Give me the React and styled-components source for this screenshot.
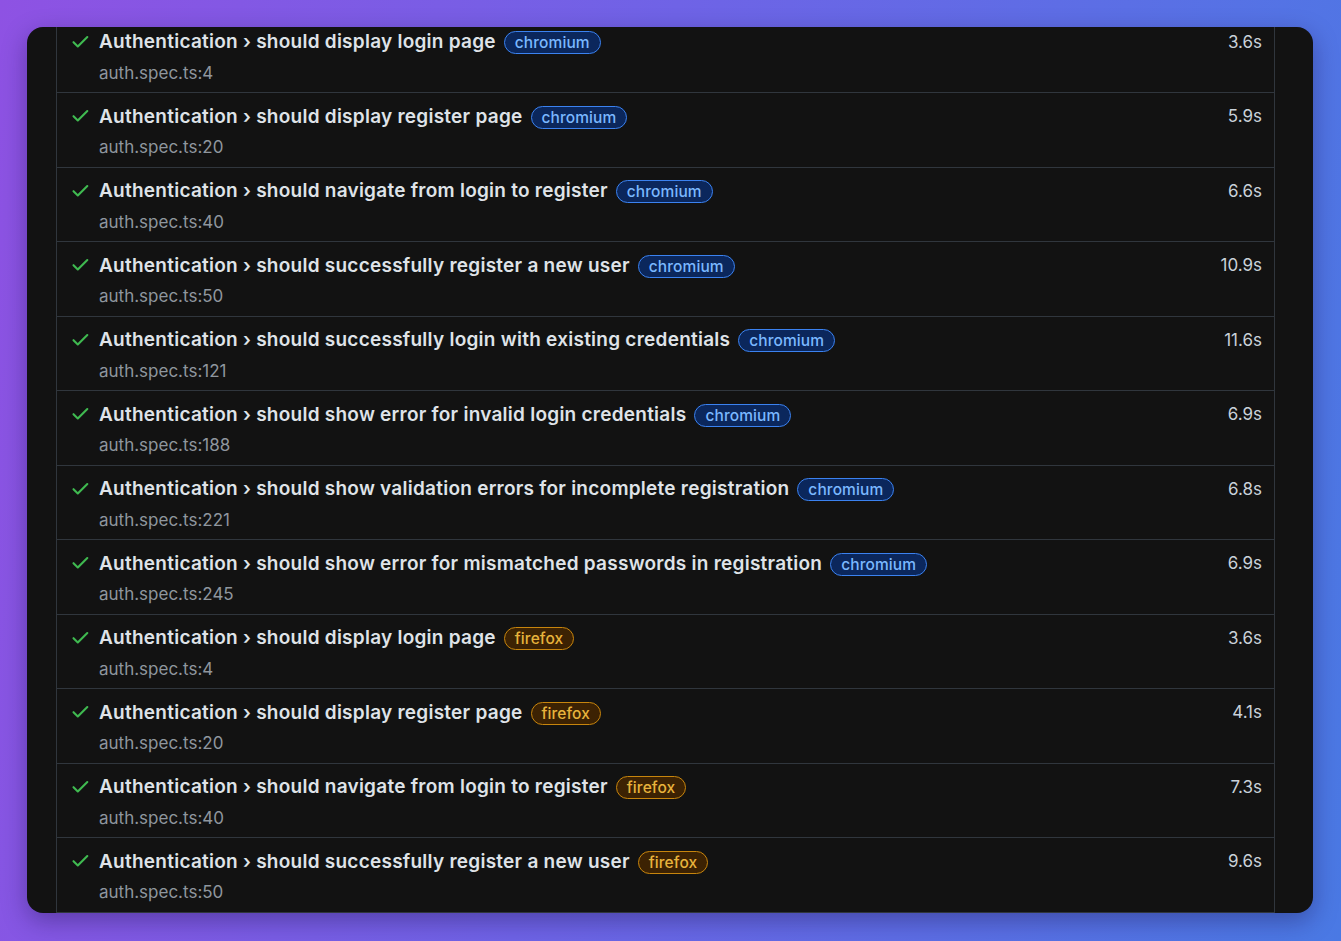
import React from "react";
import styled, { createGlobalStyle } from "styled-components";

const GlobalStyle = createGlobalStyle`
  html, body { margin: 0; padding: 0; height: 100%; }
  body {
    font-family: Inter, "Noto Sans", "Liberation Sans", sans-serif;
    -webkit-font-smoothing: antialiased;
  }
  * { box-sizing: border-box; }
`;

const Page = styled.div`
  height: 100vh;
  padding: 27px 28px 28px 27px;
  background: linear-gradient(100deg, #8e52e3 0%, #6f63e6 45%, #4a79e4 100%);
`;

const Card = styled.div`
  height: 100%;
  background: #121212;
  border-radius: 16px;
  overflow: hidden;
  padding: 0 38px 0 29px;
  box-shadow: 0 8px 24px rgba(20, 10, 60, 0.35);
`;

const List = styled.div`
  margin-top: -8.5px;
  border-left: 1px solid #30363d;
  border-right: 1px solid #30363d;
`;

const Row = styled.div`
  display: flex;
  align-items: flex-start;
  padding: 11px 12px 8.5px 15px;
  border-bottom: 1px solid #30363d;
`;

const IconCell = styled.div`
  width: 17px;
  height: 24px;
  display: flex;
  align-items: center;
  margin-right: 10px;
  color: #3fb950;
  flex: none;
`;

const Main = styled.div`
  flex: 1;
  min-width: 0;
`;

const TitleLine = styled.div`
  display: flex;
  align-items: center;
  gap: 8px;
  height: 24px;
`;

const Title = styled.span`
  font-size: 19px;
  font-weight: 600;
  color: #dfe3e8;
  white-space: nowrap;
  letter-spacing: 0.25px;
`;

const Badge = styled.span`
  display: inline-flex;
  align-items: center;
  height: 23px;
  padding: 1px 10px 0;
  margin-top: 2px;
  border-radius: 12px;
  font-size: 15.5px;
  font-weight: 500;
  line-height: 1;
  letter-spacing: 0.1px;
  ${({ $kind }) =>
    $kind === "firefox"
      ? `background: #3c2203; border: 1px solid #c7850d; color: #e8b33c;`
      : `background: #0b275c; border: 1px solid #3b82f0; color: #7ab8ff;`}
`;

const FileLine = styled.div`
  margin-top: 8px;
  font-size: 17px;
  line-height: 22px;
  color: #8f969e;
`;

const Duration = styled.div`
  font-size: 17px;
  line-height: 24px;
  color: #c9d1d9;
  flex: none;
  text-align: right;
`;

const Check = () => (
  <svg width="17" height="14" viewBox="0 0 17 14" fill="none">
    <path
      d="M1.5 7.2 L5.8 11.5 L15.3 2"
      stroke="currentColor"
      strokeWidth="2.1"
      strokeLinecap="round"
      strokeLinejoin="round"
    />
  </svg>
);

const tests = [
  ["should display login page", "chromium", "auth.spec.ts:4", "3.6s"],
  ["should display register page", "chromium", "auth.spec.ts:20", "5.9s"],
  ["should navigate from login to register", "chromium", "auth.spec.ts:40", "6.6s"],
  ["should successfully register a new user", "chromium", "auth.spec.ts:50", "10.9s"],
  ["should successfully login with existing credentials", "chromium", "auth.spec.ts:121", "11.6s"],
  ["should show error for invalid login credentials", "chromium", "auth.spec.ts:188", "6.9s"],
  ["should show validation errors for incomplete registration", "chromium", "auth.spec.ts:221", "6.8s"],
  ["should show error for mismatched passwords in registration", "chromium", "auth.spec.ts:245", "6.9s"],
  ["should display login page", "firefox", "auth.spec.ts:4", "3.6s"],
  ["should display register page", "firefox", "auth.spec.ts:20", "4.1s"],
  ["should navigate from login to register", "firefox", "auth.spec.ts:40", "7.3s"],
  ["should successfully register a new user", "firefox", "auth.spec.ts:50", "9.6s"],
];

export default function App() {
  return (
    <>
      <GlobalStyle />
      <Page>
        <Card>
          <List>
            {tests.map(([name, project, file, time], i) => (
              <Row key={i}>
                <IconCell>
                  <Check />
                </IconCell>
                <Main>
                  <TitleLine>
                    <Title>Authentication › {name}</Title>
                    <Badge $kind={project}>{project}</Badge>
                  </TitleLine>
                  <FileLine>{file}</FileLine>
                </Main>
                <Duration>{time}</Duration>
              </Row>
            ))}
          </List>
        </Card>
      </Page>
    </>
  );
}
